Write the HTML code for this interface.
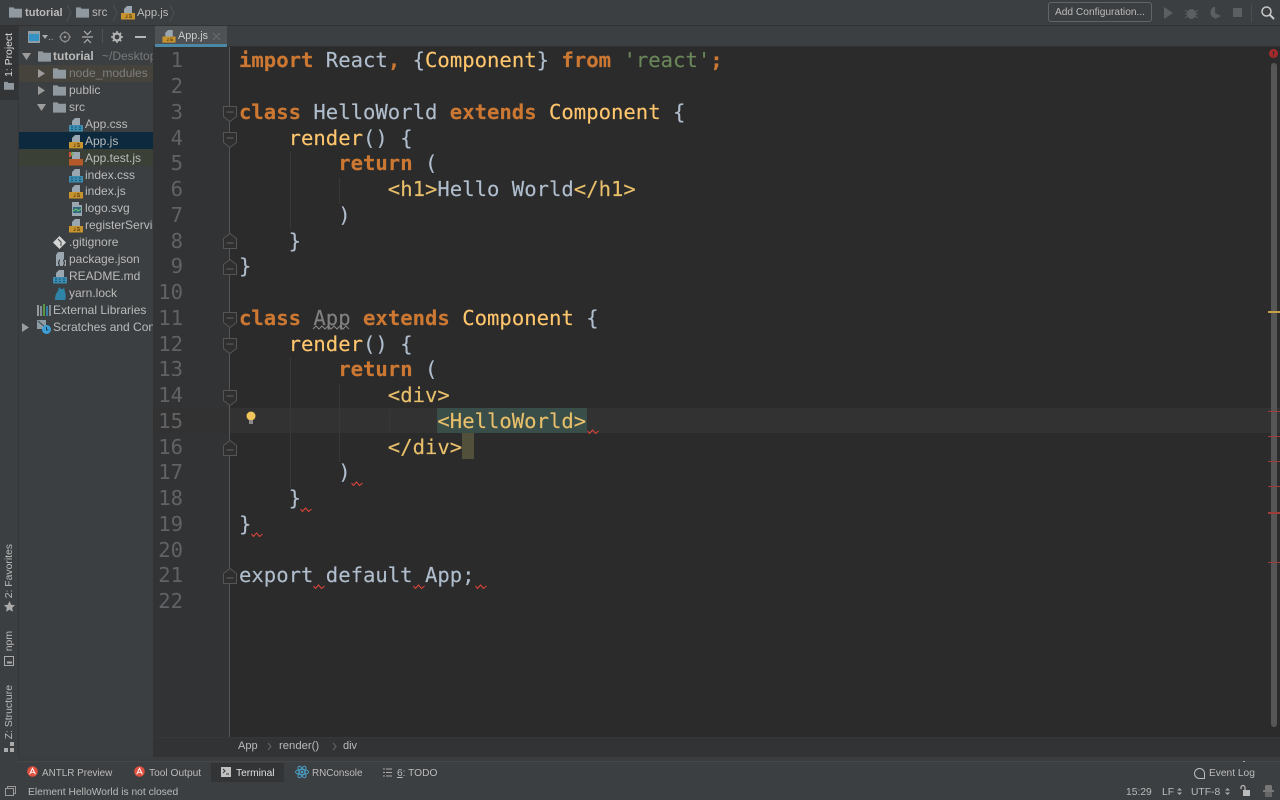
<!DOCTYPE html>
<html><head><meta charset="utf-8"><style>
*{box-sizing:border-box}
html,body{margin:0;padding:0;width:1280px;height:800px;overflow:hidden;background:#3c3f41}
body{position:relative;font-family:"Liberation Sans",sans-serif;color:#bbb;font-size:12px}
.a{position:absolute}
.t{position:absolute;white-space:nowrap;font-size:12px;line-height:17px;color:#bbb}
.c{position:absolute;left:239px;white-space:pre;font-family:"DejaVu Sans Mono",monospace;font-size:20.6px;line-height:26px;color:#afbdcd;height:26px;-webkit-text-stroke:.15px}
.n{position:absolute;left:153px;width:30px;text-align:right;font-family:"DejaVu Sans Mono",monospace;font-size:20.6px;line-height:26px;color:#606366;height:26px}
.s{font-size:10.2px}
.m{font-size:10.3px}
.k{color:#cc7832;font-weight:bold}.y{color:#e8bf6a}.f{color:#ffc66d}.g{color:#6a8759}
.v{position:absolute;writing-mode:vertical-rl;transform:rotate(180deg);font-size:10.4px;color:#bbb;white-space:nowrap}
svg{position:absolute;overflow:visible}
</style></head><body>
<svg width="0" height="0" style="position:absolute"><defs>
<symbol id="fo" viewBox="0 0 14 12"><path d="M0 1h5l1 1.5h8V12H0z" fill="#90999f"/></symbol>
<symbol id="js" viewBox="0 0 14 16"><path d="M6 1h5v7H3V4z" fill="#9aa7b0"/><rect x="0" y="8" width="14" height="6.500" fill="#c6932f"/><path d="M6 9.500v3H4.500M8 9.500h2.500M8 11h2.500v1.500H8" stroke="#5b4212" stroke-width=".7" fill="none"/></symbol>
<symbol id="tj" viewBox="0 0 14 16"><path d="M3 1h8v7H3z" fill="#9aa7b0"/><rect x="0" y="8" width="14" height="6.500" fill="#b5592b"/><path d="M0 1h2v5H0z" fill="#d9483a"/><path d="M2 1l3 2-3 2z" fill="#62b543"/></symbol>
<symbol id="cs" viewBox="0 0 14 16"><path d="M6 1h5v7H3V4z" fill="#9aa7b0"/><rect x="0" y="8" width="14" height="6.500" fill="#3c8cb0"/><path d="M2 10h2M2 12.500h2M6 10h1.500M6 12.500h1.500M10 10h2M10 12.500h2" stroke="#17506b" stroke-width=".9"/></symbol>
<symbol id="fs" viewBox="0 0 13 16"><path d="M2 1h7v3h3v11H2z" fill="#9aa7b0"/><rect x="3" y="6" width="8" height="6" fill="#2e6a7e"/><path d="M3 10l3-2 2 2 3-2" stroke="#79c96a" fill="none"/></symbol>
<symbol id="ar" viewBox="0 0 16 16"><circle cx="8" cy="8" r="6.500" fill="#e0503e"/><path d="M4.500 11.500L8 4l3.500 7.500M6 9h4" stroke="#fff" stroke-width="1.200" fill="none"/></symbol>
<symbol id="fd" viewBox="0 0 14 16"><path d="M.5 .5h13v10L7 15.500.5 10.500z" fill="#2f2f2f" stroke="#555"/><path d="M3.500 6h7" stroke="#606366"/></symbol>
<symbol id="fe" viewBox="0 0 14 16"><path d="M.5 15.500h13v-10L7 .5.5 5.500z" fill="#2f2f2f" stroke="#555"/><path d="M3.500 10h7" stroke="#606366"/></symbol>
<symbol id="sq" viewBox="0 0 12 5"><path d="M.5 2l2 2.500 3-3.500 3 3.500 3-2.500" fill="none" stroke="#d8453b" stroke-width="1.100"/></symbol>
</defs></svg>

<!-- top nav -->
<div class="a" style="left:0;top:0;width:1280px;height:26px;background:#3c3f41;border-bottom:1px solid #323232"></div>
<svg style="left:9px;top:6px" width="13" height="12"><use href="#fo"/></svg>
<div class="t" style="left:25px;top:5px;font-weight:bold;font-size:11.100px">tutorial</div>
<svg style="left:66px;top:5px" width="6" height="16"><path d="M1 0l4 8-4 8" fill="none" stroke="#4d4f51"/></svg>
<svg style="left:76px;top:6px" width="13" height="12"><use href="#fo"/></svg>
<div class="t" style="left:92px;top:5px;font-size:11.500px">src</div>
<svg style="left:112px;top:5px" width="6" height="16"><path d="M1 0l4 8-4 8" fill="none" stroke="#4d4f51"/></svg>
<svg style="left:121px;top:5px" width="14" height="16"><use href="#js"/></svg>
<div class="t" style="left:137px;top:5px;font-size:11.300px">App.js</div>
<svg style="left:169px;top:5px" width="6" height="16"><path d="M1 0l4 8-4 8" fill="none" stroke="#4d4f51"/></svg>
<div class="a" style="left:1048px;top:2px;width:104px;height:20px;border:1px solid #646464;border-radius:3px;background:#3c3f41;color:#bbb;font-size:10.200px;line-height:19px;text-align:center">Add Configuration...</div>
<svg style="left:1163px;top:7px" width="12" height="12"><path d="M1 0l9 6-9 6z" fill="#5b5f61"/></svg>
<svg style="left:1185px;top:6px" width="13" height="14"><ellipse cx="6.500" cy="8" rx="4.500" ry="5" fill="#5b5f61"/><path d="M0 4l3 2M13 4l-3 2M0 8h2M13 8h-2M0 12l3-2M13 12l-3-2" stroke="#5b5f61"/></svg>
<svg style="left:1208px;top:6px" width="14" height="14"><path d="M6 1a6 6 0 0 0 0 11h1V1z" fill="#5b5f61"/><path d="M7 7l6 3-6 3z" fill="#5b5f61"/></svg>
<div class="a" style="left:1233px;top:8px;width:9px;height:9px;background:#5b5f61"></div>
<div class="a" style="left:1251px;top:4px;width:1px;height:18px;background:#4a4d4f"></div>
<svg style="left:1261px;top:6px" width="14" height="14"><circle cx="5.500" cy="5.500" r="4.500" fill="none" stroke="#c8c8c8" stroke-width="1.500"/><path d="M9 9l4 4" stroke="#c8c8c8" stroke-width="2"/></svg>

<!-- left tool strip -->
<div class="a" style="left:0;top:26px;width:19px;height:736px;background:#3c3f41;border-right:1px solid #343637"></div>
<div class="a" style="left:0;top:26px;width:18px;height:74px;background:#323436"></div>
<div class="v" style="left:4px;top:33px;color:#ddd">1: Project</div>
<svg style="left:4px;top:81px" width="10" height="9"><use href="#fo"/></svg>
<div class="v" style="left:4px;top:544px">2: Favorites</div>
<svg style="left:4px;top:601px" width="11" height="11"><path d="M5.500 0l1.700 3.700 3.800.5-2.800 2.600.7 4-3.400-2-3.400 2 .7-4L0 4.200l3.800-.5z" fill="#aaa"/></svg>
<div class="v" style="left:4px;top:631px">npm</div>
<svg style="left:4px;top:656px" width="10" height="10"><rect x=".5" y=".5" width="9" height="9" fill="none" stroke="#aaa"/><path d="M3 6.500h5" stroke="#aaa" stroke-width="2"/></svg>
<div class="v" style="left:4px;top:685px">Z: Structure</div>
<svg style="left:4px;top:742px" width="10" height="10"><path d="M6 0h4v4H6zM0 6h4v4H0zM6 6h4v4H6z" fill="#aaa"/></svg>

<!-- project panel -->
<div class="a" style="left:19px;top:26px;width:134px;height:731px;background:#3c3f41;overflow:hidden">
<div class="a" style="left:0;top:39px;width:134px;height:17px;background:#45433c"></div>
<div class="a" style="left:0;top:106px;width:134px;height:17px;background:#0d293e"></div>
<div class="a" style="left:0;top:123px;width:134px;height:17px;background:#3a4036"></div>
<svg style="left:9px;top:5px" width="13" height="12"><rect width="12" height="12" fill="#8d9da5"/><rect x="1" y="3" width="10" height="7" fill="#3592c4"/></svg>
<svg style="left:23px;top:9px" width="6" height="4"><path d="M0 0h6L3 4z" fill="#aaa"/></svg>
<div class="a" style="left:29px;top:6px;font-size:10px;color:#aaa">..</div>
<svg style="left:40px;top:5px" width="12" height="12"><circle cx="6" cy="6" r="4.500" fill="none" stroke="#8f8f8f" stroke-width="1.300"/><circle cx="6" cy="6" r="1.300" fill="#8f8f8f"/><path d="M6 0v2M6 10v2M0 6h2M10 6h2" stroke="#8f8f8f"/></svg>
<svg style="left:63px;top:4px" width="11" height="14"><path d="M0 7h11M2 1l3.500 3.500L9 1M2 13l3.500-3.500L9 13" fill="none" stroke="#aeaeae" stroke-width="1.200"/></svg>
<div class="a" style="left:83px;top:3px;width:1px;height:14px;background:#515151"></div>
<svg style="left:92px;top:5px" width="12" height="12"><circle cx="6" cy="6" r="3.500" fill="none" stroke="#b5b5b5" stroke-width="2.200"/><path d="M6 0v2.500M6 9.500V12M0 6h2.500M9.500 6H12M1.800 1.800l1.700 1.700M8.500 8.500l1.700 1.700M1.800 10.200l1.700-1.700M8.500 3.500l1.700-1.700" stroke="#b5b5b5" stroke-width="1.500"/></svg>
<div class="a" style="left:116px;top:10px;width:11px;height:2px;background:#b5b5b5"></div>
</div>
<svg style="left:22px;top:53px" width="10" height="8"><path d="M0 0h9L4.500 7z" fill="#9c9c9c"/></svg>
<svg style="left:38px;top:50px" width="13" height="12"><use href="#fo"/></svg>
<div class="t" style="left:53px;top:48px;font-weight:bold;font-size:12px">tutorial</div>
<div class="t" style="left:102px;top:48px;color:#787878;width:51px;overflow:hidden">~/Desktop</div>
<svg style="left:38px;top:69px" width="7" height="9"><path d="M0 0l7 4.500L0 9z" fill="#9c9c9c"/></svg>
<svg style="left:53px;top:67px" width="13" height="12"><use href="#fo"/></svg>
<div class="t" style="left:69px;top:65px;color:#7f7f7f">node_modules</div>
<svg style="left:38px;top:86px" width="7" height="9"><path d="M0 0l7 4.500L0 9z" fill="#9c9c9c"/></svg>
<svg style="left:53px;top:84px" width="13" height="12"><use href="#fo"/></svg>
<div class="t" style="left:69px;top:82px">public</div>
<svg style="left:37px;top:104px" width="10" height="8"><path d="M0 0h9L4.500 7z" fill="#9c9c9c"/></svg>
<svg style="left:53px;top:101px" width="13" height="12"><use href="#fo"/></svg>
<div class="t" style="left:69px;top:99px">src</div>

<svg style="left:69px;top:117px" width="14" height="16"><use href="#cs"/></svg><div class="t" style="left:85px;top:116px">App.css</div>
<svg style="left:69px;top:134px" width="14" height="16"><use href="#js"/></svg><div class="t" style="left:85px;top:133px">App.js</div>
<svg style="left:69px;top:151px" width="14" height="16"><use href="#tj"/></svg><div class="t" style="left:85px;top:150px">App.test.js</div>
<svg style="left:69px;top:168px" width="14" height="16"><use href="#cs"/></svg><div class="t" style="left:85px;top:167px">index.css</div>
<svg style="left:69px;top:184px" width="14" height="16"><use href="#js"/></svg><div class="t" style="left:85px;top:183px">index.js</div>
<svg style="left:70px;top:201px" width="13" height="16"><use href="#fs"/></svg><div class="t" style="left:85px;top:200px">logo.svg</div>
<svg style="left:69px;top:218px" width="14" height="16"><use href="#js"/></svg><div class="t" style="left:85px;top:217px;width:68px;overflow:hidden">registerServiceWorker.js</div>

<svg style="left:53px;top:236px" width="13" height="13"><path d="M6.500 0L13 6.500 6.500 13 0 6.500z" fill="#d5d5d5"/><path d="M5 3l3 3v4" stroke="#3c3f41" fill="none"/></svg><div class="t" style="left:69px;top:234px">.gitignore</div>
<svg style="left:55px;top:252px" width="12" height="15"><path d="M3 0h6v8h2v6H1V3z" fill="#9aa7b0"/><path d="M5 8c-2 0 0 3-2 3 2 0 0 3 2 3M8 8c2 0 0 3 2 3-2 0 0 3-2 3" stroke="#2b2b2b" fill="none"/></svg><div class="t" style="left:69px;top:251px">package.json</div>
<svg style="left:53px;top:269px" width="14" height="16"><use href="#cs"/></svg><div class="t" style="left:69px;top:268px">README.md</div>
<svg style="left:54px;top:286px" width="13" height="14"><path d="M1 14c0-4 1-7 3-9l1-4 2 2h2l1-2 1 5c1 3 1 6 0 8z" fill="#2f83a7"/></svg><div class="t" style="left:69px;top:285px">yarn.lock</div>
<svg style="left:37px;top:304px" width="14" height="12"><path d="M1 1v11" stroke="#aeb9c0" stroke-width="1.500"/><path d="M4 2v10" stroke="#9aa7b0" stroke-width="1.500"/><path d="M7 0v12" stroke="#62b543" stroke-width="1.500"/><path d="M10 2v10" stroke="#3592c4" stroke-width="1.500"/><path d="M13 1v11" stroke="#9aa7b0" stroke-width="1.500"/></svg><div class="t" style="left:53px;top:302px">External Libraries</div>
<svg style="left:22px;top:323px" width="7" height="9"><path d="M0 0l7 4.500L0 9z" fill="#9c9c9c"/></svg>
<svg style="left:37px;top:320px" width="14" height="14"><rect width="9" height="9" fill="#8d9da5"/><path d="M1 1l7 6" stroke="#3c3f41"/><circle cx="9.500" cy="9.500" r="4.500" fill="#3da0d8"/><path d="M9.500 7v3h2" stroke="#1b3a4b" fill="none"/></svg><div class="t" style="left:53px;top:319px;width:100px;overflow:hidden">Scratches and Consoles</div>

<!-- tab bar -->
<div class="a" style="left:153px;top:26px;width:1127px;height:21px;background:#3c3f41;border-bottom:1px solid #323232"></div>
<div class="a" style="left:155px;top:26px;width:72px;height:21px;background:#4e5254;border-bottom:3px solid #4a88a5"></div>
<svg style="left:162px;top:29px" width="14" height="15"><use href="#js"/></svg>
<div class="t" style="left:178px;top:28px;font-size:10.800px;color:#ccc">App.js</div>
<svg style="left:213px;top:33px" width="7" height="7"><path d="M0 0l7 7M7 0L0 7" stroke="#6a6d6f"/></svg>

<!-- editor -->
<div class="a" style="left:153px;top:47px;width:76px;height:690px;background:#313335"></div>
<div class="a" style="left:229px;top:47px;width:1px;height:690px;background:#555"></div>
<div class="a" style="left:230px;top:47px;width:1050px;height:690px;background:#2b2b2b"></div>
<div class="a" style="left:230px;top:408px;width:1050px;height:25px;background:#323232"></div>
<div class="a" style="left:153px;top:408px;width:76px;height:25px;background:#323232"></div>
<div class="a" style="left:290px;top:152px;width:1px;height:77px;background:#383838"></div>
<div class="a" style="left:339px;top:178px;width:1px;height:26px;background:#383838"></div>
<div class="a" style="left:290px;top:358px;width:1px;height:130px;background:#383838"></div>
<div class="a" style="left:339px;top:384px;width:1px;height:78px;background:#383838"></div>
<div class="a" style="left:389px;top:410px;width:1px;height:22px;background:#383838"></div>
<div class="a" style="left:437px;top:408px;width:150px;height:25px;background:#3a4e49"></div>
<div class="a" style="left:462px;top:433px;width:12px;height:26px;background:#52503a"></div>

<div class="n" style="top:47px">1</div><div class="n" style="top:73px">2</div><div class="n" style="top:99px">3</div><div class="n" style="top:125px">4</div><div class="n" style="top:150px">5</div><div class="n" style="top:176px">6</div><div class="n" style="top:202px">7</div><div class="n" style="top:228px">8</div><div class="n" style="top:253px">9</div><div class="n" style="top:279px">10</div><div class="n" style="top:305px">11</div><div class="n" style="top:331px">12</div><div class="n" style="top:356px">13</div><div class="n" style="top:382px">14</div><div class="n" style="top:408px">15</div><div class="n" style="top:434px">16</div><div class="n" style="top:459px">17</div><div class="n" style="top:485px">18</div><div class="n" style="top:511px">19</div><div class="n" style="top:537px">20</div><div class="n" style="top:562px">21</div><div class="n" style="top:588px">22</div>

<svg style="left:223px;top:106px" width="14" height="16"><use href="#fd"/></svg>
<svg style="left:223px;top:132px" width="14" height="16"><use href="#fd"/></svg>
<svg style="left:223px;top:233px" width="14" height="16"><use href="#fe"/></svg>
<svg style="left:223px;top:259px" width="14" height="16"><use href="#fe"/></svg>
<svg style="left:223px;top:312px" width="14" height="16"><use href="#fd"/></svg>
<svg style="left:223px;top:338px" width="14" height="16"><use href="#fd"/></svg>
<svg style="left:223px;top:390px" width="14" height="16"><use href="#fd"/></svg>
<svg style="left:223px;top:440px" width="14" height="16"><use href="#fe"/></svg>
<svg style="left:223px;top:568px" width="14" height="16"><use href="#fe"/></svg>

<div class="c" style="top:47px"><span class="k">import</span> React<span class="k">,</span> {<span class="f">Component</span>} <span class="k">from</span> <span class="g">'react'</span><span class="k">;</span></div>
<div class="c" style="top:99px"><span class="k">class</span> HelloWorld <span class="k">extends</span> <span class="f">Component</span> {</div>
<div class="c" style="top:125px">    <span class="f">render</span>() {</div>
<div class="c" style="top:150px">        <span class="k">return</span> (</div>
<div class="c" style="top:176px">            <span class="y">&lt;h1&gt;</span>Hello World<span class="y">&lt;/h1&gt;</span></div>
<div class="c" style="top:202px">        )</div>
<div class="c" style="top:228px">    }</div>
<div class="c" style="top:253px">}</div>
<div class="c" style="top:305px"><span class="k">class</span> <span style="color:#808080">App</span> <span class="k">extends</span> <span class="f">Component</span> {</div>
<div class="c" style="top:331px">    <span class="f">render</span>() {</div>
<div class="c" style="top:356px">        <span class="k">return</span> (</div>
<div class="c" style="top:382px">            <span class="y">&lt;div&gt;</span></div>
<div class="c" style="top:408px">                <span class="y">&lt;HelloWorld&gt;</span></div>
<div class="c" style="top:434px">            <span class="y">&lt;/div&gt;</span></div>
<div class="c" style="top:459px">        )</div>
<div class="c" style="top:485px">    }</div>
<div class="c" style="top:511px">}</div>
<div class="c" style="top:562px">export default App;</div>

<svg style="left:313px;top:325px" width="38" height="5"><path d="M0 4l3-3 3 3 3-3 3 3 3-3 3 3 3-3 3 3 3-3 3 3 3-3 3 3" fill="none" stroke="#888"/></svg>
<svg style="left:587px;top:429px" width="12" height="5"><use href="#sq"/></svg>
<svg style="left:351px;top:481px" width="12" height="5"><use href="#sq"/></svg>
<svg style="left:300px;top:507px" width="12" height="5"><use href="#sq"/></svg>
<svg style="left:251px;top:532px" width="12" height="5"><use href="#sq"/></svg>
<svg style="left:313px;top:584px" width="12" height="5"><use href="#sq"/></svg>
<svg style="left:413px;top:584px" width="12" height="5"><use href="#sq"/></svg>
<svg style="left:475px;top:584px" width="12" height="5"><use href="#sq"/></svg>

<svg style="left:246px;top:411px" width="10" height="14"><circle cx="5" cy="5" r="4.500" fill="#f2c55c"/><rect x="3" y="9" width="4" height="4" fill="#8a8a8a"/></svg>

<!-- scrollbar & marks -->
<div class="a" style="left:1271px;top:63px;width:6px;height:664px;background:#565656;border-radius:3px"></div>
<svg style="left:1269px;top:49px" width="10" height="10"><circle cx="4.500" cy="4.500" r="4.500" fill="#a82a2a"/><path d="M4.500 2v3.500M4.500 6.500v1" stroke="#2b2b2b" stroke-width="1.200"/></svg>
<div class="a" style="left:1268px;top:311px;width:12px;height:2px;background:#c6a044"></div>
<div class="a" style="left:1268px;top:411px;width:12px;height:1px;background:#a03c38"></div>
<div class="a" style="left:1268px;top:436px;width:12px;height:1px;background:#a03c38"></div>
<div class="a" style="left:1268px;top:461px;width:12px;height:1px;background:#a03c38"></div>
<div class="a" style="left:1268px;top:486px;width:12px;height:1px;background:#a03c38"></div>
<div class="a" style="left:1268px;top:512px;width:12px;height:2px;background:#a03c38"></div>
<div class="a" style="left:1268px;top:562px;width:12px;height:1px;background:#a03c38"></div>

<!-- breadcrumbs -->
<div class="a" style="left:153px;top:737px;width:1127px;height:20px;background:#313335;border-top:1px solid #353739"></div>
<div class="t" style="left:238px;top:738px;font-size:11px">App</div>
<svg style="left:268px;top:743px" width="4" height="7"><path d="M0 0l3 3.500L0 7" stroke="#666" fill="none"/></svg>
<div class="t" style="left:279px;top:738px;font-size:11.300px">render()</div>
<svg style="left:333px;top:743px" width="4" height="7"><path d="M0 0l3 3.500L0 7" stroke="#666" fill="none"/></svg>
<div class="t" style="left:343px;top:738px;font-size:11px">div</div>

<!-- lower -->
<div class="a" style="left:0;top:757px;width:1280px;height:43px;background:#3c3f41"></div>
<div class="a" style="left:18px;top:757px;width:1262px;height:5px;background:#3a3c3e;border-bottom:1px solid #454749"></div>
<div class="a" style="left:211px;top:763px;width:73px;height:19px;background:#323436"></div>

<svg style="left:26px;top:765px" width="13" height="13" viewBox="0 0 16 16"><use href="#ar"/></svg>
<div class="t s" style="left:42px;top:765px;font-size:9.900px">ANTLR Preview</div>
<svg style="left:133px;top:765px" width="13" height="13" viewBox="0 0 16 16"><use href="#ar"/></svg>
<div class="t s" style="left:149px;top:765px">Tool Output</div>
<svg style="left:221px;top:767px" width="10" height="10"><rect width="10" height="10" fill="#c0c0c0"/><path d="M2 2l2 2-2 2M5 7h3" stroke="#323436" fill="none"/></svg>
<div class="t s" style="left:236px;top:765px;color:#e0e0e0">Terminal</div>
<svg style="left:295px;top:765px" width="14" height="14" viewBox="0 0 14 14"><g fill="none" stroke="#4a9dc4"><ellipse cx="7" cy="7" rx="6.500" ry="2.600"/><ellipse cx="7" cy="7" rx="6.500" ry="2.600" transform="rotate(60 7 7)"/><ellipse cx="7" cy="7" rx="6.500" ry="2.600" transform="rotate(120 7 7)"/></g><circle cx="7" cy="7" r="1.300" fill="#4a9dc4"/></svg>
<div class="t s" style="left:312px;top:765px;font-size:9.900px">RNConsole</div>
<svg style="left:383px;top:768px" width="9" height="9"><path d="M0 1h2M3 1h6M0 4.500h2M3 4.500h6M0 8h2M3 8h6" stroke="#aaa"/></svg>
<div class="t s" style="left:397px;top:765px"><u>6</u>: TODO</div>
<svg style="left:1194px;top:768px" width="11" height="11"><path d="M5.500.5a5 5 0 1 0 0 10h5v-5a5 5 0 0 0-5-5z" fill="none" stroke="#bbb"/></svg>
<div class="t s" style="left:1209px;top:765px">Event Log</div>
<div class="a" style="left:1243px;top:761px;width:2px;height:1px;background:#aaa"></div>

<svg style="left:5px;top:786px" width="11" height="10"><rect x="2.500" y=".5" width="8" height="7" fill="none" stroke="#999"/><rect x=".5" y="2.500" width="8" height="7" fill="#3c3f41" stroke="#999"/></svg>
<div class="t m" style="left:28px;top:784px;font-size:10.250px">Element HelloWorld is not closed</div>
<div class="t m" style="left:1126px;top:784px">15:29</div>
<div class="t m" style="left:1162px;top:784px">LF</div>
<svg style="left:1177px;top:788px" width="5" height="7"><path d="M0 2.500L2.500 0 5 2.500zM0 4.500L2.500 7 5 4.500z" fill="#aaa"/></svg>
<div class="t m" style="left:1191px;top:784px">UTF-8</div>
<svg style="left:1225px;top:788px" width="5" height="7"><path d="M0 2.500L2.500 0 5 2.500zM0 4.500L2.500 7 5 4.500z" fill="#aaa"/></svg>
<svg style="left:1240px;top:785px" width="10" height="11"><path d="M1 4V2.500a2 2 0 0 1 4 0V5" fill="none" stroke="#bbb" stroke-width="1.200"/><rect x="3" y="5" width="7" height="6" fill="#bbb"/></svg>
<svg style="left:1263px;top:785px" width="11" height="12"><rect x="2" y="0" width="7" height="6" rx="1.500" fill="#777"/><rect x="0" y="5" width="11" height="2" fill="#777"/><rect x="2" y="7" width="7" height="5" fill="#666"/></svg>
</body></html>
